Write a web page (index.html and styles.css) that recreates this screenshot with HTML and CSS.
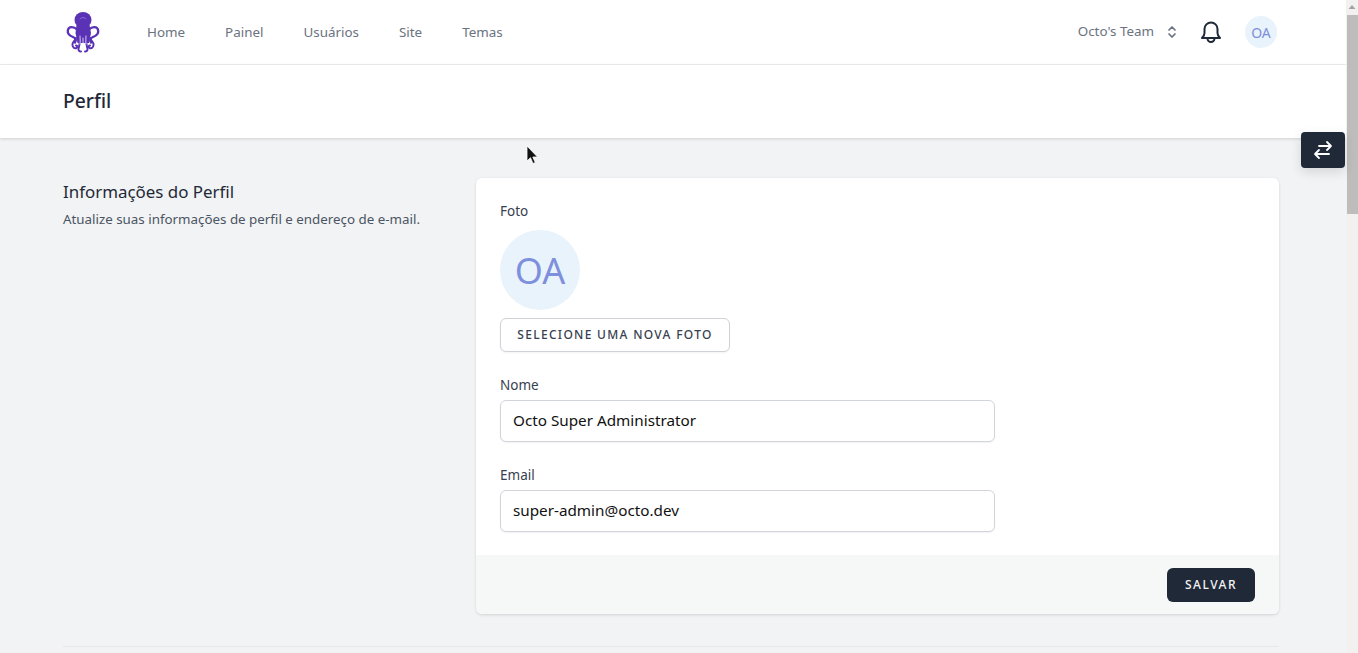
FILE: index.html
```html
<!DOCTYPE html>
<html lang="pt">
<head>
<meta charset="utf-8">
<title>Perfil</title>
<link rel="stylesheet" href="styles.css">
</head>
<body>
<div class="app">
  <div class="page">
    <nav class="nav">
      <svg class="logo" width="36" height="42" viewBox="0 0 36 42" fill="none" stroke="#5a32b6" stroke-linecap="round" stroke-linejoin="round">
        <ellipse cx="18" cy="9" rx="8.500" ry="8" fill="#5a32b6" stroke="none"/>
        <path d="M11.500 14h13l1.500 8-2 10H12.500l-2-10z" fill="#5a32b6" stroke="none"/>
        <path stroke-width="2.300" d="M12 18.500C9 15.500 3.500 15 2.800 19.500c-.6 4 2.700 5.500 5.200 6.500 3 1.200 3.500 3.500 2 5.500"/>
        <path stroke-width="2.300" d="M24 18.500c3-3 8.500-3.500 9.200 1 .6 4-2.700 5.500-5.200 6.500-3 1.200-3.500 3.500-2 5.500"/>
        <path stroke-width="2" d="M11 27c-1 3-3 3.500-3.500 6-.5 3 2 5 4 4 1.500-1 .8-2.800-.5-2.500"/>
        <path stroke-width="2" d="M25 27c1 3 3 3.500 3.500 6 .5 3-2 5-4 4-1.500-1-.8-2.800.5-2.500"/>
        <path stroke-width="2" d="M14.500 30c.5 4-.5 5.500-1 7.500-.3 1.500.5 3 2.500 3"/>
        <path stroke-width="2" d="M21.500 30c-.5 4 .5 5.500 1 7.500.3 1.500-.5 3-2.500 3"/>
        <path stroke="#d9cdf2" stroke-width="1" d="M15 25c0 3 .5 5 0 8M21 25c0 3-.5 5 0 8M18 27v5"/>
        <path stroke="#8c6fd6" stroke-width="1" d="M15 8c1-2 5-2 6 0"/>
      </svg>
      <div class="links">
        <a class="link">Home</a>
        <a class="link">Painel</a>
        <a class="link">Usuários</a>
        <a class="link">Site</a>
        <a class="link">Temas</a>
      </div>
      <div class="nav-right">
        <span class="team">Octo's Team</span>
        <svg class="updown" width="10" height="14" viewBox="0 0 10 14" fill="none" stroke="#6b7280" stroke-width="1.700" stroke-linecap="round" stroke-linejoin="round"><path d="M2 5l3-3 3 3M2 9l3 3 3-3"/></svg>
        <svg class="bell" width="22" height="24" viewBox="0 0 22 24" fill="none" stroke="#1f2937" stroke-width="2" stroke-linecap="round" stroke-linejoin="round"><path d="M11 2.500a6.500 6.500 0 0 0-6.500 6.500v4c0 2.200-1 3.500-2.500 5h18c-1.500-1.500-2.500-2.800-2.500-5V9A6.500 6.500 0 0 0 11 2.500zM7.500 18.500a3.500 3.500 0 0 0 7 0"/></svg>
        <div class="avatar-small">OA</div>
      </div>
    </nav>
    <header class="page-head"><h1 class="title">Perfil</h1></header>
    <main class="content">
      <section class="section">
        <div class="intro">
          <h2 class="intro-title">Informações do Perfil</h2>
          <p class="intro-text">Atualize suas informações de perfil e endereço de e-mail.</p>
        </div>
        <div class="card">
          <div class="card-body">
            <label class="label">Foto</label>
            <div class="avatar-big">OA</div>
            <button class="btn-light">SELECIONE UMA NOVA FOTO</button>
            <label class="label label-field">Nome</label>
            <input class="input" value="Octo Super Administrator">
            <label class="label label-field">Email</label>
            <input class="input" value="super-admin@octo.dev">
          </div>
          <div class="card-foot"><button class="btn-dark">SALVAR</button></div>
        </div>
      </section>
      <hr class="divider">
    </main>
  </div>
  <div class="scrollbar">
    <svg class="arrow" width="12" height="12" viewBox="0 0 12 12"><path d="M2.500 8L6 4l3.500 4z" fill="#a3a3a3"/></svg>
    <div class="thumb"></div>
  </div>
</div>
<button class="float-btn">
  <svg width="20" height="20" viewBox="0 0 20 20" fill="none" stroke="#fff" stroke-width="1.800" stroke-linecap="round" stroke-linejoin="round"><path d="M6 6h12M14 2l4 4-4 4M16 14H2M6 10l-4 4 4 4"/></svg>
</button>
<svg class="cursor" width="14" height="20" viewBox="0 0 14 20"><path d="M1 1v15l3.500-3.300 2.500 5.800 2.300-1-2.500-5.500H11.500z" fill="#111" stroke="#fff" stroke-width=".8"/></svg>
</body>
</html>
```
FILE: styles.css
```css
* { box-sizing: border-box; }
html, body { margin: 0; height: 100%; overflow: hidden; }
body { font-family: "Noto Sans", "Open Sans", sans-serif; background: #f1f3f4; color: #1f2937; }
.app { display: flex; height: 653px; }
.page { width: 1346px; flex: none; overflow: hidden; }
.nav { height: 65px; background: #fff; border-bottom: 1px solid #eceef0; display: flex; align-items: center; padding: 0 69px 0 65px; }
.logo { flex: none; }
.links { display: flex; gap: 40px; margin-left: 46px; margin-bottom: 1px; }
.link { font-size: 13.400px; color: #6b7280; }
.nav-right { margin-left: auto; display: flex; align-items: center; }
.team { font-size: 13.400px; color: #6b7280; margin-bottom: 3px; }
.updown { margin-left: 13px; }
.bell { margin-left: 23px; }
.avatar-small { width: 32px; height: 32px; border-radius: 50%; background: #e8f3fb; color: #7e8fdd; font-size: 14px; display: flex; align-items: center; justify-content: center; margin-left: 23px; }
.page-head { height: 73px; background: #fff; box-shadow: 0 1px 3px rgba(0,0,0,.15); padding: 23px 0 0 63px; }
.title { margin: 0; font-size: 19.300px; line-height: 26px; font-weight: 500; color: #1f2937; }
.content { padding: 40px 67px 0 63px; }
.section { display: grid; grid-template-columns: 413px 803px; }
.intro-title { margin: 0; font-size: 16.900px; line-height: 28px; font-weight: 400; color: #1f2937; }
.intro-text { margin: 3px 0 0; font-size: 13.350px; line-height: 20px; color: #4b5563; }
.card { background: #fff; border-radius: 6px; box-shadow: 0 1px 3px rgba(0,0,0,.14); overflow: hidden; }
.card-body { padding: 23px 24px 0; height: 377px; display: flex; flex-direction: column; align-items: flex-start; }
.label { flex: none; font-size: 13.500px; line-height: 20px; color: #374151; }
.label-field { margin-top: 23px; }
.avatar-big { flex: none; width: 80px; height: 80px; border-radius: 50%; background: #e8f3fb; color: #7e8fdd; font-size: 36px; display: flex; align-items: center; justify-content: center; margin-top: 9px; }
.btn-light { flex: none; margin-top: 8px; height: 34px; width: 230px; background: #fff; border: 1px solid #cfd2d6; border-radius: 6px; font: 500 12px "Noto Sans", sans-serif; letter-spacing: 1.300px; color: #374151; box-shadow: 0 1px 2px rgba(0,0,0,.05); padding: 0 0 2px; }
.input { flex: none; margin-top: 5px; width: 495px; height: 42px; border: 1px solid #d1d5db; border-radius: 6px; padding: 0 12px 2px; font: 15.250px "Noto Sans", sans-serif; color: #111; box-shadow: 0 1px 2px rgba(0,0,0,.06); background: #fff; }
.card-foot { height: 59px; background: #f6f8f7; display: flex; justify-content: flex-end; align-items: center; padding: 0 24px; }
.btn-dark { width: 88px; height: 34px; background: #1f2937; border: 0; border-radius: 6px; color: #f3f4f6; font: 500 12px "Noto Sans", sans-serif; letter-spacing: 1.500px; padding: 0; }
.divider { border: 0; border-top: 1px solid #e5e7eb; margin: 32px 0 0; }
.scrollbar { flex: 1; background: #f3f1f0; position: relative; }
.arrow { display: block; margin-top: 1px; }
.thumb { position: absolute; left: 1px; right: 0; top: 15px; height: 199px; background: #bfbdbb; }
.float-btn { position: absolute; left: 1301px; top: 132px; width: 44px; height: 36px; background: #1f2937; border: 0; border-radius: 4px; box-shadow: 0 4px 12px rgba(0,0,0,.12); display: flex; align-items: center; justify-content: center; padding: 0; }
.cursor { position: absolute; left: 526px; top: 145px; }
```
